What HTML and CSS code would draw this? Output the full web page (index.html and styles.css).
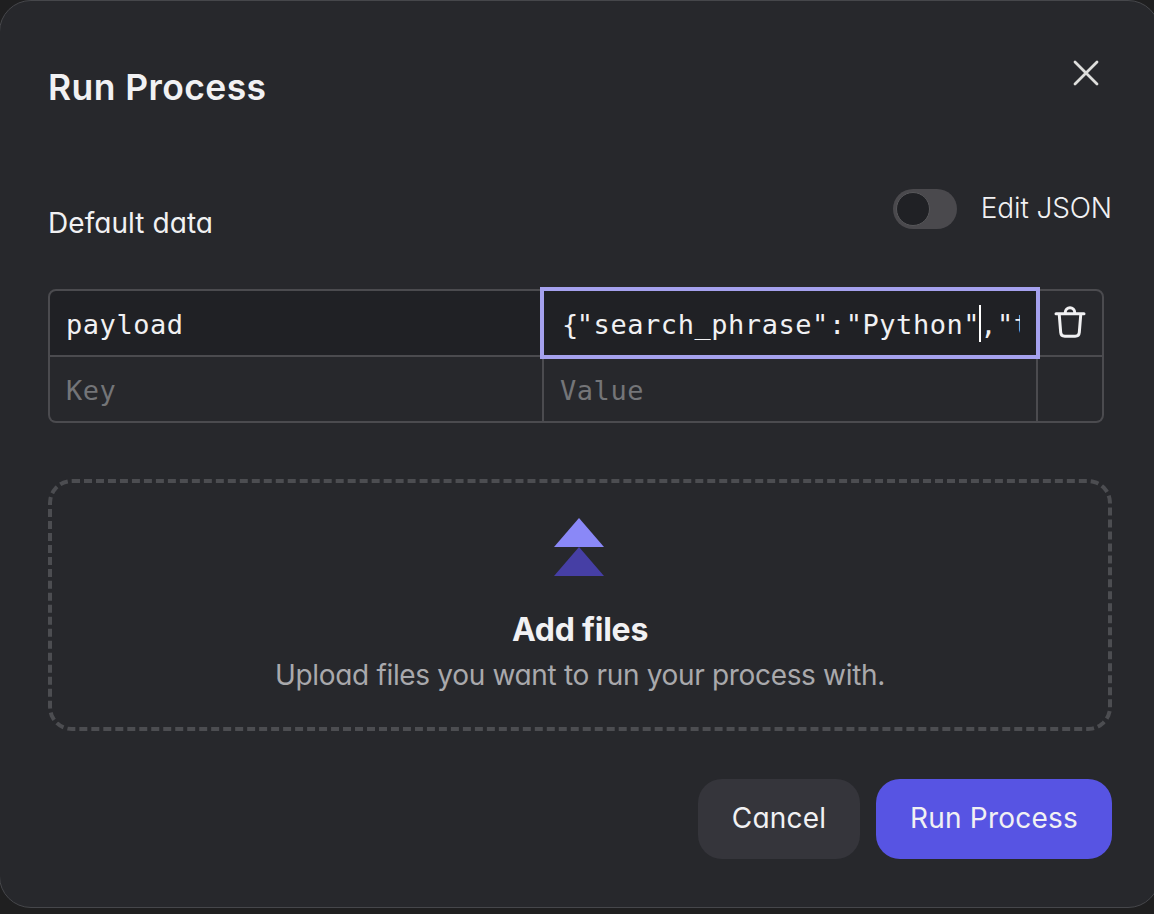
FILE: index.html
```html
<!DOCTYPE html>
<html lang="en">
<head>
<meta charset="utf-8">
<title>Run Process</title>
<link rel="stylesheet" href="styles.css">
</head>
<body>
<main class="dialog">
  <header class="header">
    <h1 class="title"><span>Run Process</span></h1>
    <button class="close" aria-label="Close">
      <svg width="26" height="26" viewBox="0 0 26 26"><path d="M2 2 24 24M24 2 2 24" fill="none" stroke="currentColor" stroke-width="2.8" stroke-linecap="round"/></svg>
    </button>
  </header>
  <section class="data-head">
    <h2 class="data-title"><span>Default data</span></h2>
    <div class="switch-row">
      <div class="switch"><div class="knob"></div></div>
      <span class="switch-label">Edit JSON</span>
    </div>
  </section>
  <section class="table">
    <div class="cell filled">payload</div>
    <div class="cell filled focused"><div class="value"><span class="brace">{</span><span>"search_phrase":"Python"</span><i class="caret"></i><span>,"t</span></div></div>
    <div class="cell action">
      <svg width="32" height="34" viewBox="0 0 32 34" fill="none" stroke="currentColor" stroke-width="3" stroke-linecap="round" stroke-linejoin="round"><path d="M2 8.7H30M5.2 9 6.7 27.5Q7 31.3 10.8 31.3H21.2Q25 31.3 25.3 27.5L26.8 9M11.2 8C11.2 1.1 20.8 1.1 20.8 8"/></svg>
    </div>
    <div class="cell empty">Key</div>
    <div class="cell empty">Value</div>
    <div class="cell"></div>
  </section>
  <section class="dropzone">
    <svg class="upload" width="50" height="58" viewBox="0 0 50 58"><path d="M25 0 50 29H0Z" fill="#8a88f7"/><path d="M25 29 50 58H0Z" fill="#463fa5"/></svg>
    <h3 class="drop-title"><span>Add files</span></h3>
    <p class="drop-text"><span>Upload files you want to run your process with.</span></p>
  </section>
  <footer class="footer">
    <button class="btn cancel"><span>Cancel</span></button>
    <button class="btn primary"><span>Run Process</span></button>
  </footer>
</main>
</body>
</html>
```
FILE: styles.css
```css
* { box-sizing: border-box; }
html, body { margin: 0; height: 914px; overflow: hidden; }
body {
  background: #1f1f20;
  color: #f1f1f3;
  font-family: Inter, "Liberation Sans", sans-serif;
  font-feature-settings: "cv11" 1;
}
h1, h2, h3, p { margin: 0; }
button { border: 0; padding: 0; background: none; color: inherit; font: inherit; font-feature-settings: inherit; }
svg { display: block; }
.dialog {
  width: 1161px;
  height: 908px;
  margin-left: -1px;
  padding: 59px 47px 0 48px;
  border: 1px solid #46474b;
  border-radius: 32px;
  background: #27282c;
}
.header { display: flex; justify-content: space-between; height: 128px; }
.title { margin-top: 5px; font-size: 35.5px; line-height: 46px; font-weight: 600; letter-spacing: 0.4px; white-space: nowrap; }
.close { width: 26px; height: 26px; margin-right: 13px; color: #dededc; }
.data-head { display: flex; justify-content: space-between; height: 101px; }
.data-title { margin-top: 17px; font-size: 28px; line-height: 36px; font-weight: 400; letter-spacing: 0.06px; }
.switch-row { display: flex; align-items: center; gap: 24px; height: 42px; }
.switch { width: 64px; height: 40px; padding: 3px; border-radius: 20px; background: #4a494d; }
.knob { width: 34px; height: 34px; border-radius: 50%; background: #202125; border: 1px solid #57575a; }
.switch-label { margin-top: -2px; font-size: 28px; line-height: 38px; font-weight: 300; letter-spacing: -0.12px; white-space: nowrap; }
.table {
  display: grid;
  grid-template-columns: 492px 492px 64px;
  grid-template-rows: 64px 64px;
  gap: 2px;
  width: 1056px;
  height: 134px;
  border: 2px solid #4b4b4f;
  border-radius: 8px;
  background: #4b4b4f;
  font-family: "DejaVu Sans Mono", monospace;
  font-size: 27px;
  letter-spacing: 0.55px;
}
.cell { position: relative; padding: 0 16px; background: #27282c; line-height: 68px; white-space: pre; }
.cell:first-child { border-top-left-radius: 6px; }
.cell:nth-child(3) { border-top-right-radius: 6px; }
.cell:nth-child(4) { border-bottom-left-radius: 6px; }
.cell:nth-child(6) { border-bottom-right-radius: 6px; }
.filled { background: #202125; }
.empty { color: #747578; }
.action { display: flex; padding: 14px 0 0 16px; }
.focused { z-index: 1; }
.focused::after { content: ""; position: absolute; inset: -4px; border: 4px solid #a5a1ee; }
.value { display: flex; width: 460px; height: 64px; overflow: hidden; }
.brace { margin: 0 -2px 0 2px; }
.caret { flex: none; width: 2px; height: 37px; margin: 14px -1px 0 -1px; background: #fff; }
.dropzone {
  display: flex;
  flex-direction: column;
  align-items: center;
  width: 1064px;
  height: 252px;
  margin-top: 56px;
  padding-top: 35px;
  border: 4px dashed #4c4d51;
  border-radius: 24px;
}
.upload { margin-right: 2px; }
.drop-title { margin-top: 34px; font-size: 32px; line-height: 40px; font-weight: 700; letter-spacing: -0.25px; }
.drop-text { margin-top: 6px; font-size: 28px; line-height: 38px; letter-spacing: -0.33px; color: #a9a9ac; white-space: nowrap; }
.footer { display: flex; justify-content: flex-end; gap: 16px; margin-top: 48px; }
.btn { height: 80px; border-radius: 24px; font-size: 28px; line-height: 78px; padding-bottom: 2px; letter-spacing: 0.2px; white-space: nowrap; }
.cancel { width: 162px; background: #35353b; }
.primary { width: 236px; background: #5754e3; }
```
